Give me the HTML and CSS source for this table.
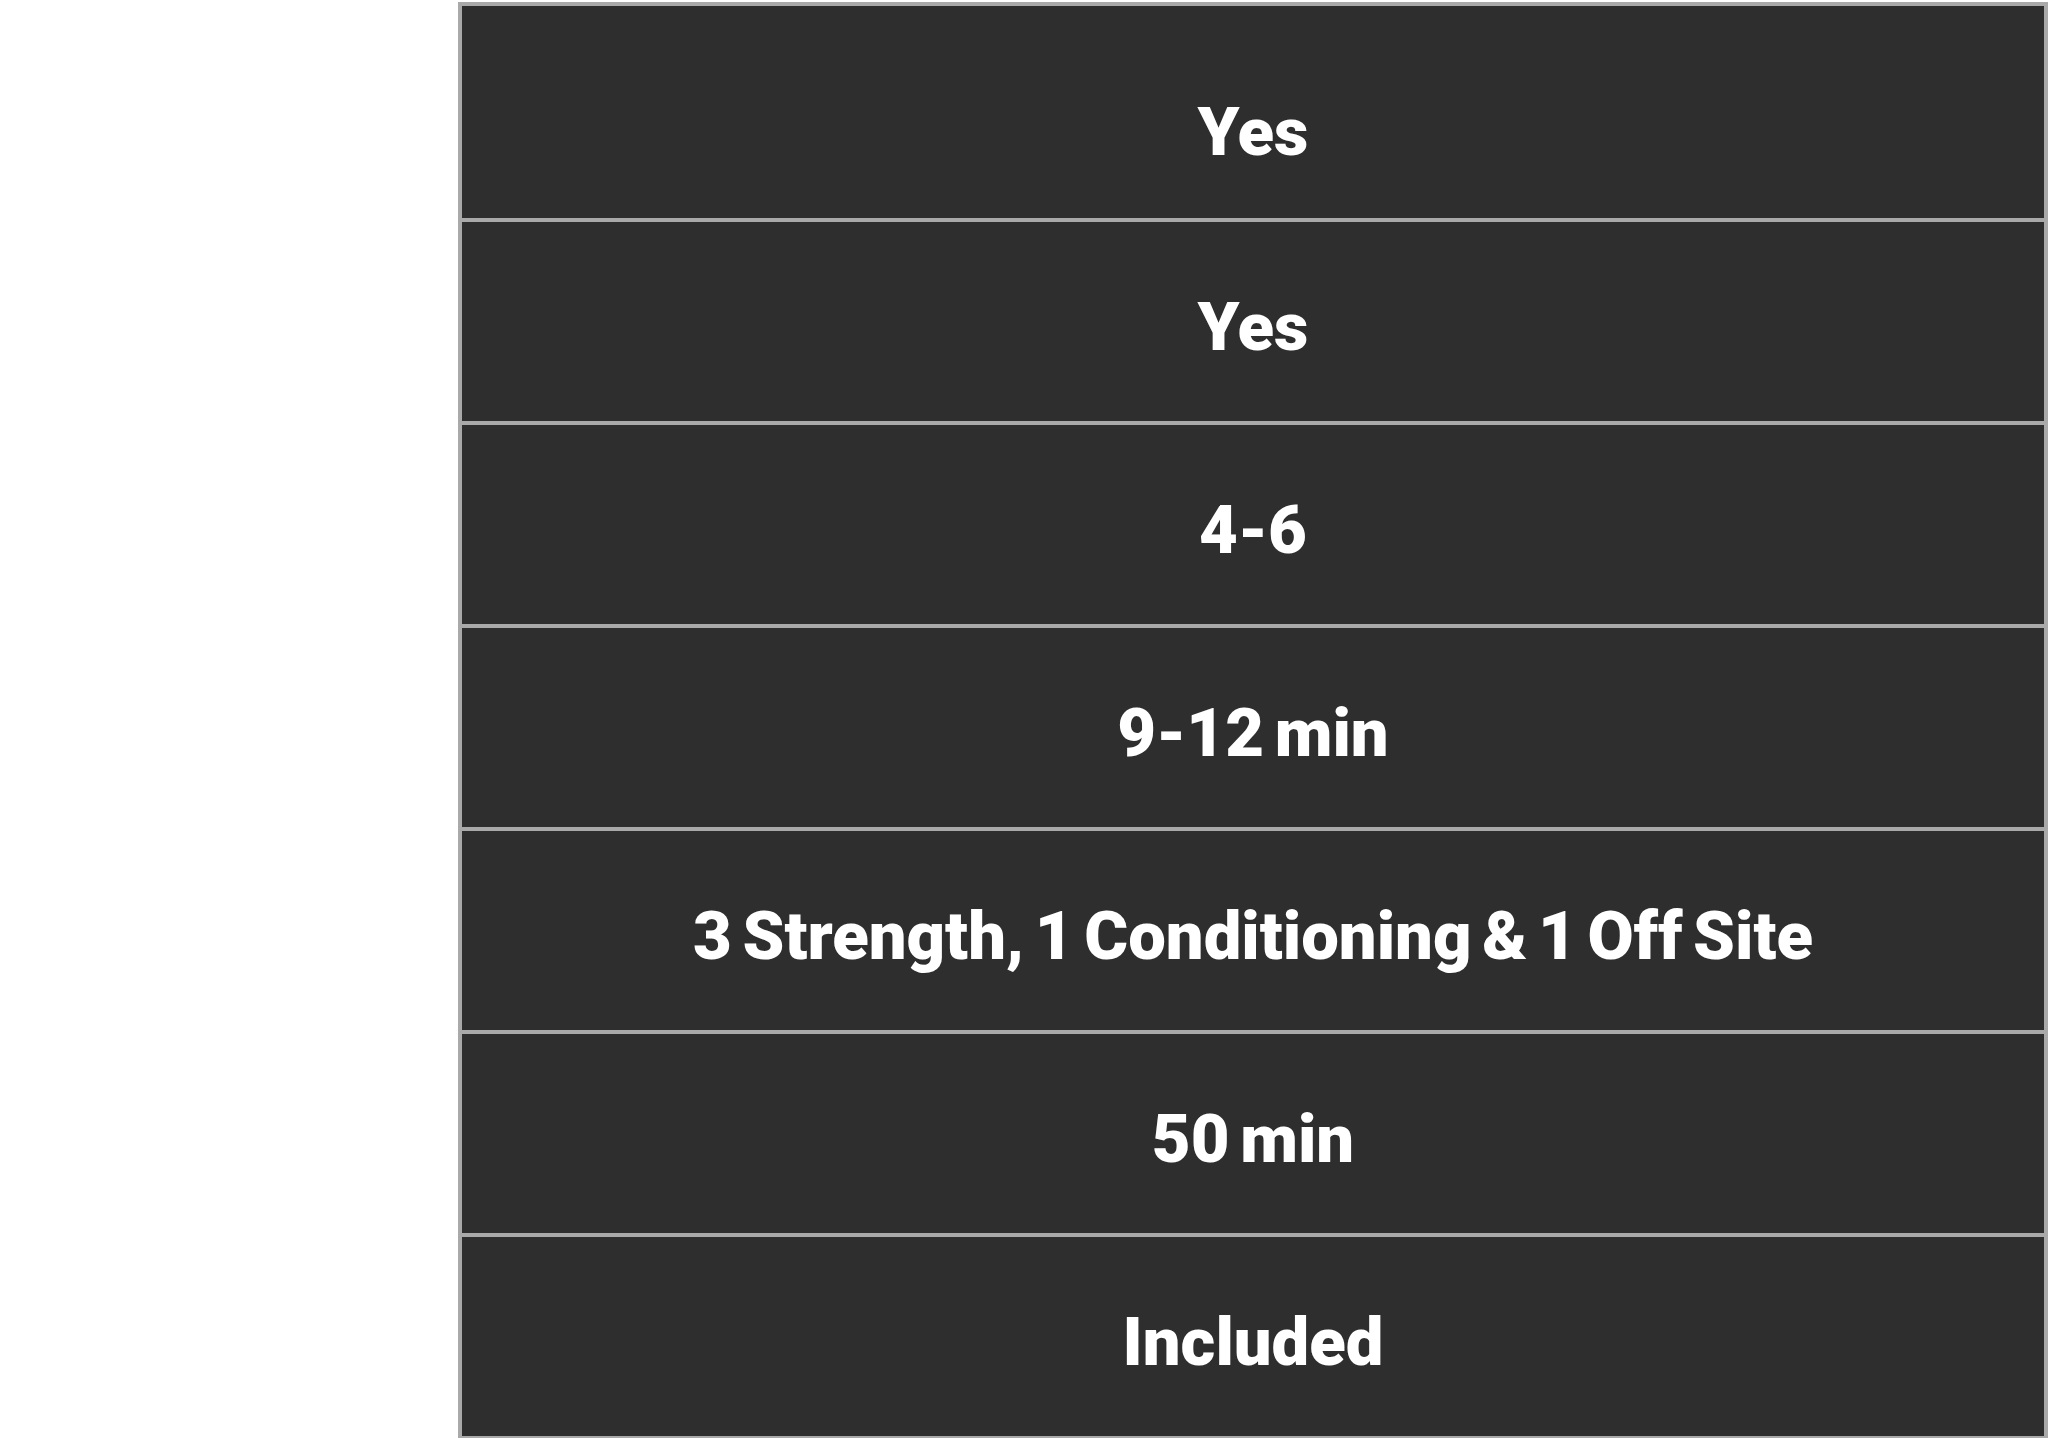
FILE: index.html
```html
<!DOCTYPE html>
<html lang="en">
<head>
<meta charset="utf-8">
<title>Comparison</title>
<link rel="stylesheet" href="styles.css">
</head>
<body>
<div class="page">
  <div class="labels"></div>
  <div class="table">
    <div class="row row-first"><span class="val">Yes</span></div>
    <div class="row"><span class="val">Yes</span></div>
    <div class="row"><span class="val">4-6</span></div>
    <div class="row"><span class="val">9-12 min</span></div>
    <div class="row"><span class="val">3 Strength, 1 Conditioning &amp; 1 Off Site</span></div>
    <div class="row"><span class="val">50 min</span></div>
    <div class="row row-last"><span class="val">Included</span></div>
  </div>
</div>
</body>
</html>
```

FILE: styles.css
```css
html, body {
  margin: 0;
  padding: 0;
  background: #ffffff;
}
.page {
  display: flex;
  width: 2048px;
  height: 1438px;
  overflow: hidden;
  padding-top: 2px;
  box-sizing: border-box;
}
.labels {
  width: 458px;
  flex: none;
}
.table {
  flex: 1;
  display: flex;
  flex-direction: column;
  border: 4px solid #a9a9a9;
  border-bottom: 0;
  background: #2e2e2e;
  align-self: flex-start;
}
.row {
  border-bottom: 4px solid #a9a9a9;
  display: flex;
  align-items: center;
  justify-content: center;
  padding-top: 12px;
  box-sizing: content-box;
  height: 187px;
}
.row-first {
  height: 172px;
  padding-top: 40px;
}
.val {
  font-family: Roboto, "Liberation Sans", sans-serif;
  font-weight: 900;
  font-size: 67px;
  word-spacing: -6px;
  color: #ffffff;
  line-height: 1;
}
```
